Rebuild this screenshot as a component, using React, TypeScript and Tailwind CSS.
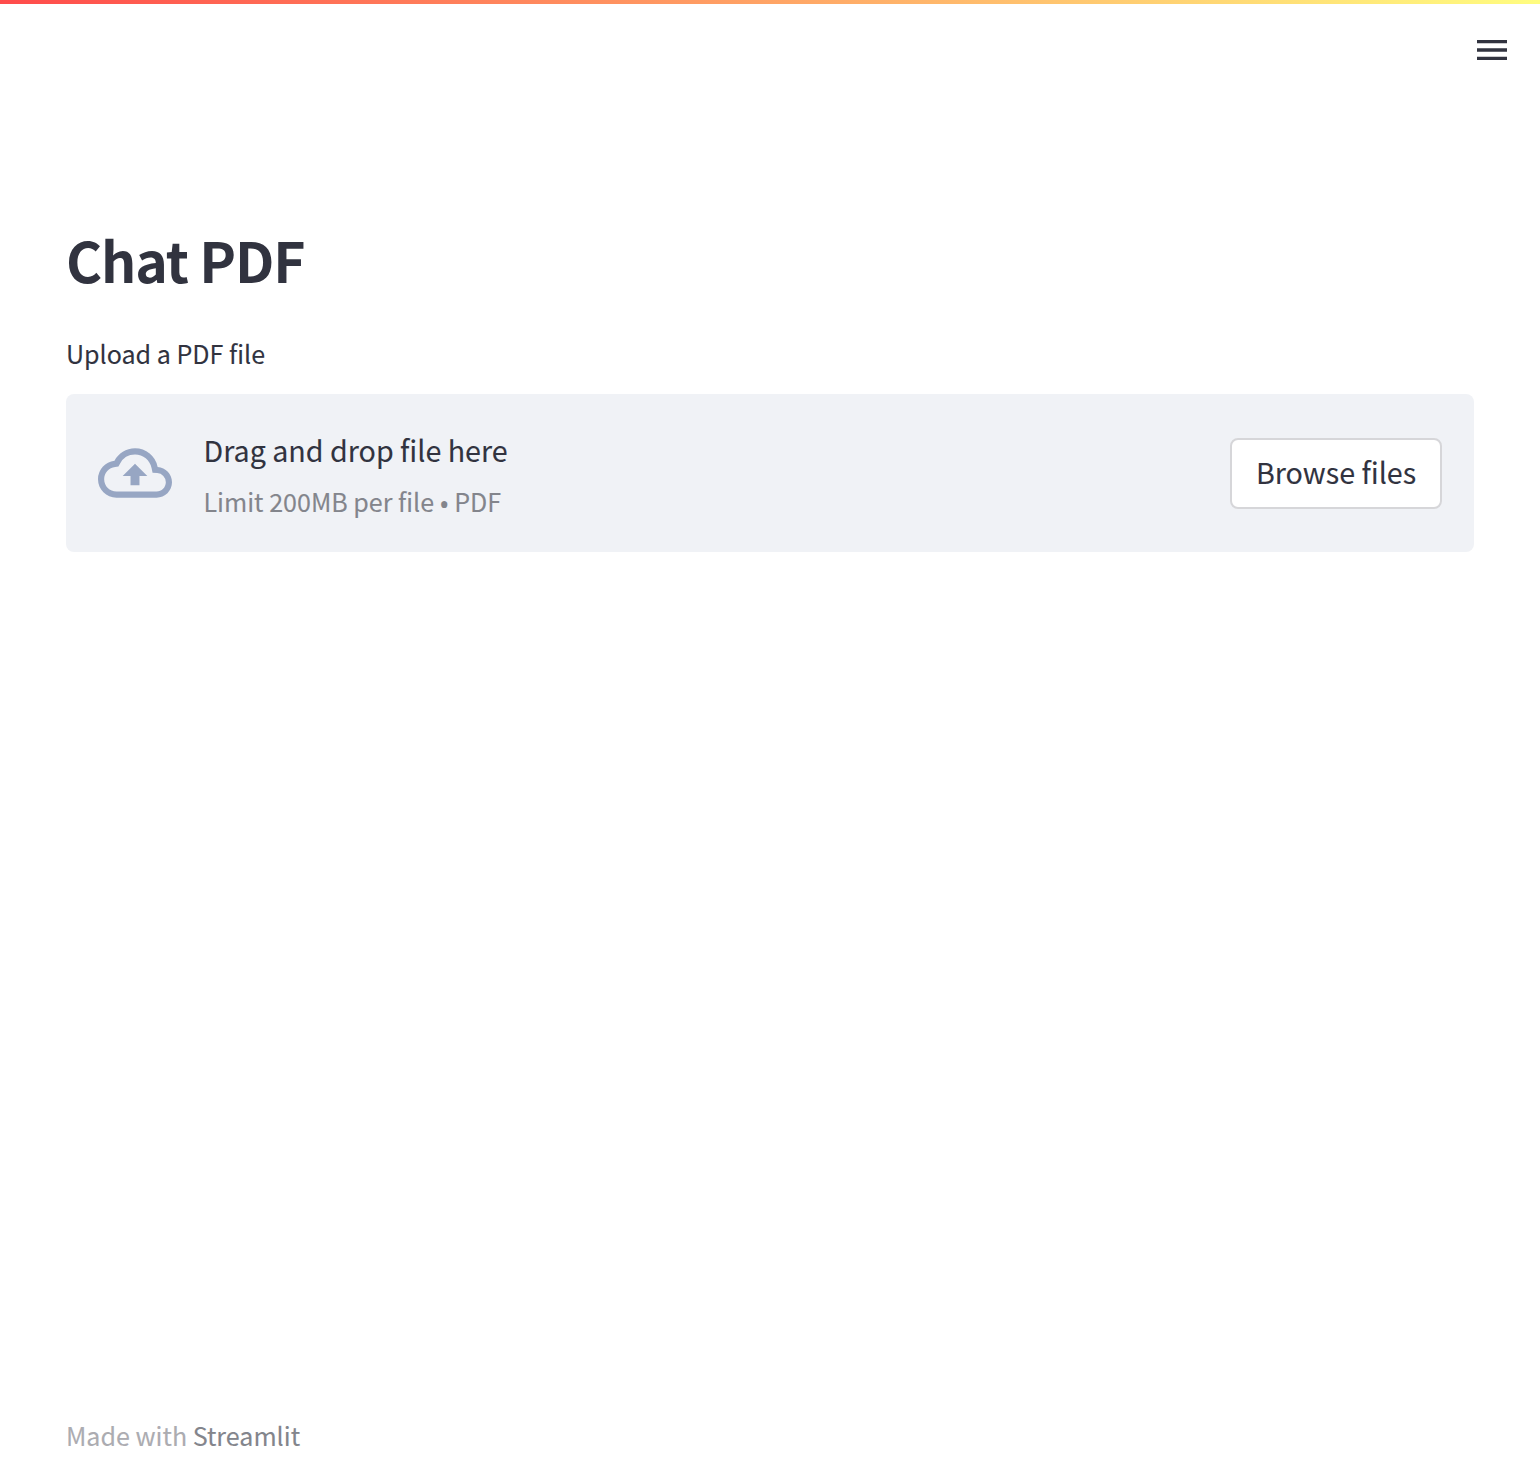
import React from "react";

export default function App() {
  return (
    <div className="flex h-[1478px] w-full flex-col bg-white font-['Noto_Sans_CJK_SC',sans-serif] text-[#31333f]">
      <div className="h-1 shrink-0 bg-linear-to-r/srgb from-[#ff4b4b] to-[#fffd80]" />
      <header className="flex h-[92px] shrink-0 items-center justify-end pr-[28px]">
        <button aria-label="Menu" className="size-10">
          <svg viewBox="0 0 40 40" className="size-10" fill="currentColor">
            <path d="M5 10h30v3.3H5zM5 18.3h30v3.4H5zM5 26.7h30V30H5z" />
          </svg>
        </button>
      </header>
      <main className="flex grow flex-col px-[66px] pt-[127px] [-webkit-text-stroke:0.1px_currentColor]">
        <h1 className="h-[72px] text-[55.2px] leading-[72px] font-bold tracking-[-1.1px] [-webkit-text-stroke:0]">Chat PDF</h1>
        <p className="mt-[37px] h-[42px] text-[25.07px] leading-[42px]">Upload a PDF file</p>
        <section className="mt-5 flex h-[158px] items-center rounded-lg bg-[#f0f2f6] px-8">
          <svg viewBox="0 0 24 24" className="mr-[31.5px] h-[74px] w-[74px] text-[#97a6c3]" fill="currentColor">
            <path d="M19.35 10.04A7.49 7.49 0 0 0 12 4C9.11 4 6.6 5.64 5.35 8.04A5.994 5.994 0 0 0 0 14c0 3.31 2.69 6 6 6h13c2.76 0 5-2.24 5-5 0-2.64-2.05-4.78-4.65-4.96zM19 18H6c-2.21 0-4-1.79-4-4 0-2.05 1.53-3.76 3.56-3.97l1.07-.11.5-.95A5.469 5.469 0 0 1 12 6c2.62 0 4.88 1.86 5.39 4.43l.3 1.5 1.53.11A2.98 2.98 0 0 1 22 15c0 1.65-1.35 3-3 3zM8 13h2.55v3h2.9v-3H16l-4-4z" />
          </svg>
          <div className="grow pt-[5px]">
            <p className="h-[52px] text-[28.65px] leading-[51px]">Drag and drop file here</p>
            <p className="flex h-[51px] text-[25.07px] leading-[51px] text-[#83858c]">
              <span>Limit 200MB per file</span>
              <span className="w-5 pt-[2px] text-center font-['Open_Sans',sans-serif] text-[29px]">•</span>
              <span>PDF</span>
            </p>
          </div>
          <button className="h-[71px] w-[212px] rounded-lg border-2 border-[#d6d6d9] bg-white pb-[2px] text-[28.65px]">Browse files</button>
        </section>
      </main>
      <footer className="flex h-[84px] shrink-0 gap-[5.5px] px-[66px] text-[25.07px] leading-[82px] text-[#acacb1] [-webkit-text-stroke:0.1px_currentColor]">
        <span>Made with</span>
        <a className="text-[#83858c]">Streamlit</a>
      </footer>
    </div>
  );
}
